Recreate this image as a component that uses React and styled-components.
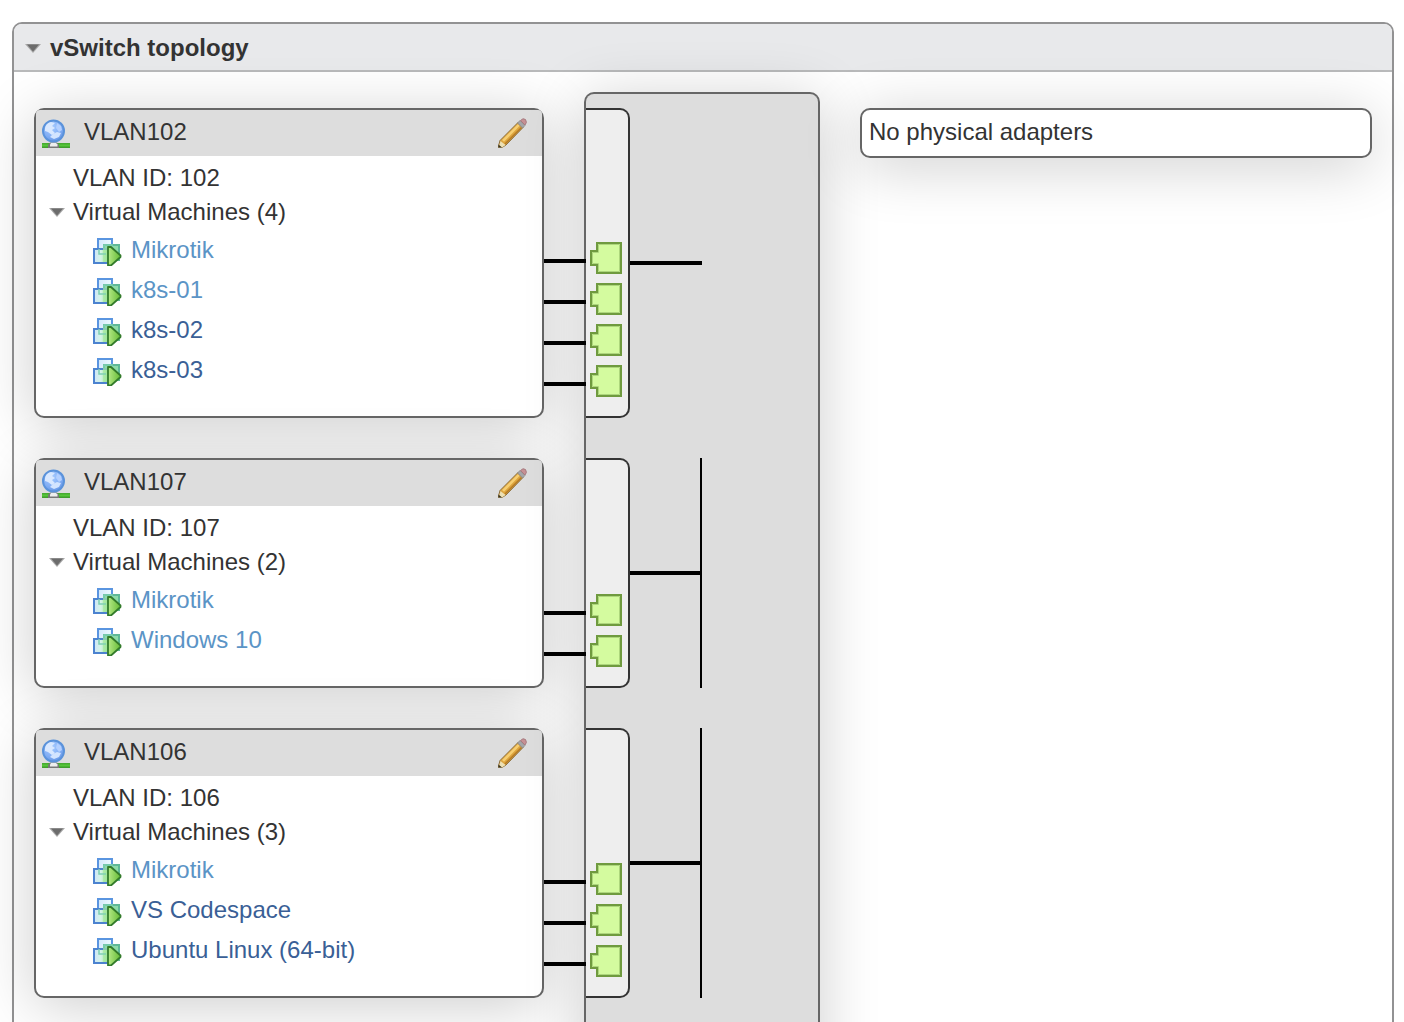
import React, { useState } from "react";
import styled, { createGlobalStyle } from "styled-components";

const GlobalStyle = createGlobalStyle`
  *, *::before, *::after { box-sizing: border-box; }
  body {
    margin: 0;
    background: #fff;
    color: #333;
    font-family: "Liberation Sans", Arial, Helvetica, sans-serif;
    font-size: 24px;
  }
`;

const SHADOW = "0 8px 60px rgba(0, 0, 0, 0.2)";

const Page = styled.main`
  height: 100vh;
  overflow: auto;
  scrollbar-width: none;
  padding: 22px 10px 0 12px;
`;

const Panel = styled.section`
  border: 2px solid #929293;
  border-radius: 10px;
`;

const PanelHeader = styled.header`
  display: flex;
  align-items: center;
  gap: 8px;
  height: 48px;
  padding: 2px 0 0 10px;
  background: #e8e9eb;
  border-bottom: 2px solid #b9babb;
  border-radius: 8px 8px 0 0;
`;

const PanelTitle = styled.h1`
  margin: 0;
  font-size: 24px;
  line-height: 34px;
  font-weight: bold;
`;

const IconButton = styled.button`
  display: flex;
  flex: none;
  margin: 0;
  padding: 0;
  border: 0;
  background: none;
  cursor: pointer;
`;

const Arrow = styled.svg`
  display: block;
  transform: ${(p) => (p.$open ? "none" : "rotate(-90deg)")};
`;

const Topology = styled.div`
  display: grid;
  grid-template-columns: minmax(0, 510fr) 40px 236px 40px minmax(0, 512fr);
  grid-template-rows: repeat(${(p) => p.$rows}, auto) 1fr;
  row-gap: 40px;
  min-height: 100vh;
  padding: 36px 20px 0;
`;

const Card = styled.article`
  grid-column: 1;
  grid-row: ${(p) => p.$row};
  background: #fff;
  border: 2px solid #666;
  border-radius: 10px;
  box-shadow: ${SHADOW};
`;

const CardHeader = styled.header`
  display: flex;
  align-items: center;
  gap: 12px;
  height: 46px;
  padding: 0 14px 0 6px;
  background: #ddd;
  border-radius: 4px 4px 0 0;
`;

const CardTitle = styled.h2`
  flex: 1;
  margin: 0;
  padding-bottom: 2px;
  font-size: 24px;
  line-height: 34px;
  font-weight: normal;
`;

const CardBody = styled.div`
  padding: 5px 12px 26px;
  line-height: 34px;
`;

const VlanId = styled.p`
  margin: 0;
  padding-left: 25px;
`;

const MachinesHeading = styled.div`
  display: flex;
  align-items: center;
  gap: 7px;
`;

const MachineList = styled.ul`
  margin: 0;
  padding: 1px 0 0 44px;
  list-style: none;
`;

const Machine = styled.li`
  display: flex;
  align-items: center;
  gap: 9px;
  height: 40px;
`;

const MachineLink = styled.a`
  color: ${(p) => (p.$light ? "#5b94c6" : "#3a5f96")};
  text-decoration: none;
`;

const Wires = styled.div`
  grid-column: 2;
  grid-row: ${(p) => p.$row};
  z-index: 1;
  display: flex;
  flex-direction: column;
  justify-content: flex-end;
  gap: 37px;
  margin-right: -2px;
  padding-bottom: 32px;
`;

const Wire = styled.div`
  height: 4px;
  background: #000;
`;

const SwitchBody = styled.div`
  grid-column: 3;
  grid-row: 1 / -1;
  margin-top: -16px;
  background: #ddd;
  border: 2px solid #666;
  border-bottom: 0;
  border-radius: 10px 10px 0 0;
  box-shadow: ${SHADOW};
`;

const SwitchRow = styled.div`
  grid-column: 3;
  grid-row: ${(p) => p.$row};
  z-index: 1;
  display: flex;
  padding-left: 2px;
`;

const PortBlock = styled.div`
  display: flex;
  flex-direction: column;
  justify-content: flex-end;
  gap: 9px;
  width: 44px;
  padding: 0 0 19px 4px;
  background: #eee;
  border: 2px solid #333;
  border-left: 0;
  border-radius: 0 10px 10px 0;
`;

const Uplink = styled.div`
  display: flex;
  align-items: center;
  width: 72px;
  border-right: ${(p) => (p.$trunk ? "2px solid #000" : "0")};
`;

const UplinkWire = styled(Wire)`
  flex: 1;
`;

const Adapters = styled.aside`
  grid-column: 5;
  grid-row: 1;
  align-self: start;
  padding: 5px 7px 7px;
  line-height: 34px;
  background: #fff;
  border: 2px solid #666;
  border-radius: 10px;
  box-shadow: ${SHADOW};
`;

function ArrowIcon({ open }) {
  return (
    <Arrow $open={open} width="18" height="10" viewBox="0 0 18 10" aria-hidden="true">
      <path d="M1 1H17L9 10Z" fill="#a8a8a8" />
      <path d="M3 1.5H15L9 8.5Z" fill="#6c6c6c" />
    </Arrow>
  );
}

function NetworkIcon() {
  return (
    <svg width="30" height="32" viewBox="0 0 30 32" aria-hidden="true">
      <defs>
        <radialGradient id="globe" cx="0.4" cy="0.3" r="0.75">
          <stop offset="0" stopColor="#a9ccff" />
          <stop offset="0.6" stopColor="#83aff5" />
          <stop offset="1" stopColor="#6393e4" />
        </radialGradient>
        <linearGradient id="cable" x1="0" x2="0" y1="0" y2="1">
          <stop offset="0" stopColor="#45a52f" />
          <stop offset="0.5" stopColor="#56c638" />
          <stop offset="1" stopColor="#3c932c" />
        </linearGradient>
      </defs>
      <rect x="0" y="26" width="28" height="5" fill="url(#cable)" />
      <path d="M6 31V28L8 25.500H15L17 28V31Z" fill="#777" />
      <path d="M8 29.500V27.500L9 26H14L15.500 27.500V29.500Z" fill="#eee" />
      <circle cx="11.500" cy="14" r="10.500" fill="url(#globe)" stroke="#5a92da" strokeWidth="2" />
      <path d="M3 11Q4 6 9 5L13 6L10 9L13 11L10 13L13 16L10 18L6 15L3 14Z" fill="#d9e8ff" />
      <path d="M15 6L19 9L20 13L17 15L14 11Z" fill="#b4d0ff" />
      <path d="M11 17L15 15L19 16L17 20L12 22L8 20Z" fill="#d3e4ff" />
    </svg>
  );
}

function PencilIcon() {
  return (
    <svg width="30" height="32" viewBox="0 -1 30 32" aria-hidden="true">
      <path d="M0.500 28L2 22.500L20 4.500L25 9.500L8 27L4 29.500H0.500Z" fill="#dca33b" stroke="#8b7040" strokeWidth="1" />
      <path d="M4 22L20 6L21.800 7.800L6 23.800Z" fill="#f6ce72" />
      <path d="M7 26L23.500 9.500" stroke="#b47a26" strokeWidth="1.500" />
      <path d="M1 28.500L2.500 23L7.500 27L4 29.500H1Z" fill="#ece0b4" />
      <path d="M0.500 29.500V26.500L4 29.500Z" fill="#34301e" />
      <path d="M19.500 5L22 2.500L27 7.500L24.500 10Z" fill="#a5a5a8" stroke="#858585" strokeWidth="0.800" />
      <path d="M22.500 2.500Q25 -0.500 27.500 1.500Q29.500 4.500 27 7Z" fill="#c79094" stroke="#a77b80" strokeWidth="1" />
    </svg>
  );
}

function MachineIcon() {
  return (
    <svg width="30" height="32" viewBox="0 -1 30 32" aria-hidden="true">
      <defs>
        <linearGradient id="pane" x1="0" x2="1" y1="0" y2="0.3">
          <stop offset="0" stopColor="#d0e6fb" />
          <stop offset="1" stopColor="#eefaff" />
        </linearGradient>
        <linearGradient id="front" x1="0" x2="1" y1="0" y2="0">
          <stop offset="0" stopColor="#cfe5f8" />
          <stop offset="0.500" stopColor="#d4f4e6" />
          <stop offset="1" stopColor="#8ce080" />
        </linearGradient>
        <linearGradient id="play" x1="0" x2="1" y1="0" y2="0">
          <stop offset="0" stopColor="#b5e986" />
          <stop offset="1" stopColor="#65bb36" />
        </linearGradient>
      </defs>
      <rect x="6" y="4" width="14" height="14" fill="url(#pane)" stroke="#5a95e0" strokeWidth="2" />
      <rect x="12" y="10" width="15" height="15" fill="#8ddba8" stroke="#5fb897" strokeWidth="2" />
      <rect x="2" y="14" width="14" height="14" fill="url(#front)" stroke="#4c83cf" strokeWidth="2" />
      <path d="M11 13H16V27H11Z" fill="#a5e8a0" opacity="0.700" />
      <path d="M7 14V19H14M12 14V10H20V16" fill="none" stroke="#7fd0b4" strokeWidth="1.500" />
      <path d="M16 12H19L28.500 20.500V22L19 30.500H16Z" fill="url(#play)" stroke="#337b2b" strokeWidth="1.800" strokeLinejoin="round" />
    </svg>
  );
}

function PortIcon() {
  return (
    <svg width="32" height="32" viewBox="0 0 32 32" aria-hidden="true">
      <path d="M7 1H31V31H7V23H1V9H7Z" fill="#d4fb9f" stroke="#6f9a3f" strokeWidth="2" />
      <path d="M8.500 2.500H29.500V29.500H8.500V21.500H2.500V10.500H8.500Z" fill="none" stroke="#add67c" strokeWidth="1" />
    </svg>
  );
}

const groups = [
  {
    id: 102,
    machines: [
      { name: "Mikrotik", light: true },
      { name: "k8s-01", light: true },
      { name: "k8s-02" },
      { name: "k8s-03" },
    ],
  },
  {
    id: 107,
    trunk: true,
    machines: [
      { name: "Mikrotik", light: true },
      { name: "Windows 10", light: true },
    ],
  },
  {
    id: 106,
    trunk: true,
    machines: [
      { name: "Mikrotik", light: true },
      { name: "VS Codespace" },
      { name: "Ubuntu Linux (64-bit)" },
    ],
  },
];

function PortGroup({ group, row }) {
  const [open, setOpen] = useState(true);
  const machines = open ? group.machines : [];
  return (
    <>
      <Card $row={row}>
        <CardHeader>
          <NetworkIcon />
          <CardTitle>VLAN{group.id}</CardTitle>
          <IconButton type="button" aria-label={`Edit VLAN${group.id}`}>
            <PencilIcon />
          </IconButton>
        </CardHeader>
        <CardBody>
          <VlanId>VLAN ID: {group.id}</VlanId>
          <MachinesHeading>
            <IconButton
              type="button"
              aria-label="Toggle virtual machines"
              aria-expanded={open}
              onClick={() => setOpen(!open)}
            >
              <ArrowIcon open={open} />
            </IconButton>
            <span>Virtual Machines ({group.machines.length})</span>
          </MachinesHeading>
          <MachineList>
            {machines.map((m) => (
              <Machine key={m.name}>
                <MachineIcon />
                <MachineLink href="#" $light={m.light}>
                  {m.name}
                </MachineLink>
              </Machine>
            ))}
          </MachineList>
        </CardBody>
      </Card>
      <Wires $row={row}>
        {machines.map((m) => (
          <Wire key={m.name} />
        ))}
      </Wires>
      <SwitchRow $row={row}>
        <PortBlock>
          {machines.map((m) => (
            <PortIcon key={m.name} />
          ))}
        </PortBlock>
        <Uplink $trunk={group.trunk}>
          <UplinkWire />
        </Uplink>
      </SwitchRow>
    </>
  );
}

export default function App() {
  const [open, setOpen] = useState(true);
  return (
    <>
      <GlobalStyle />
      <Page>
        <Panel>
          <PanelHeader>
            <IconButton
              type="button"
              aria-label="Toggle vSwitch topology"
              aria-expanded={open}
              onClick={() => setOpen(!open)}
            >
              <ArrowIcon open={open} />
            </IconButton>
            <PanelTitle>vSwitch topology</PanelTitle>
          </PanelHeader>
          {open && (
            <Topology $rows={groups.length}>
              {groups.map((g, i) => (
                <PortGroup key={g.id} group={g} row={i + 1} />
              ))}
              <SwitchBody />
              <Adapters>No physical adapters</Adapters>
            </Topology>
          )}
        </Panel>
      </Page>
    </>
  );
}
